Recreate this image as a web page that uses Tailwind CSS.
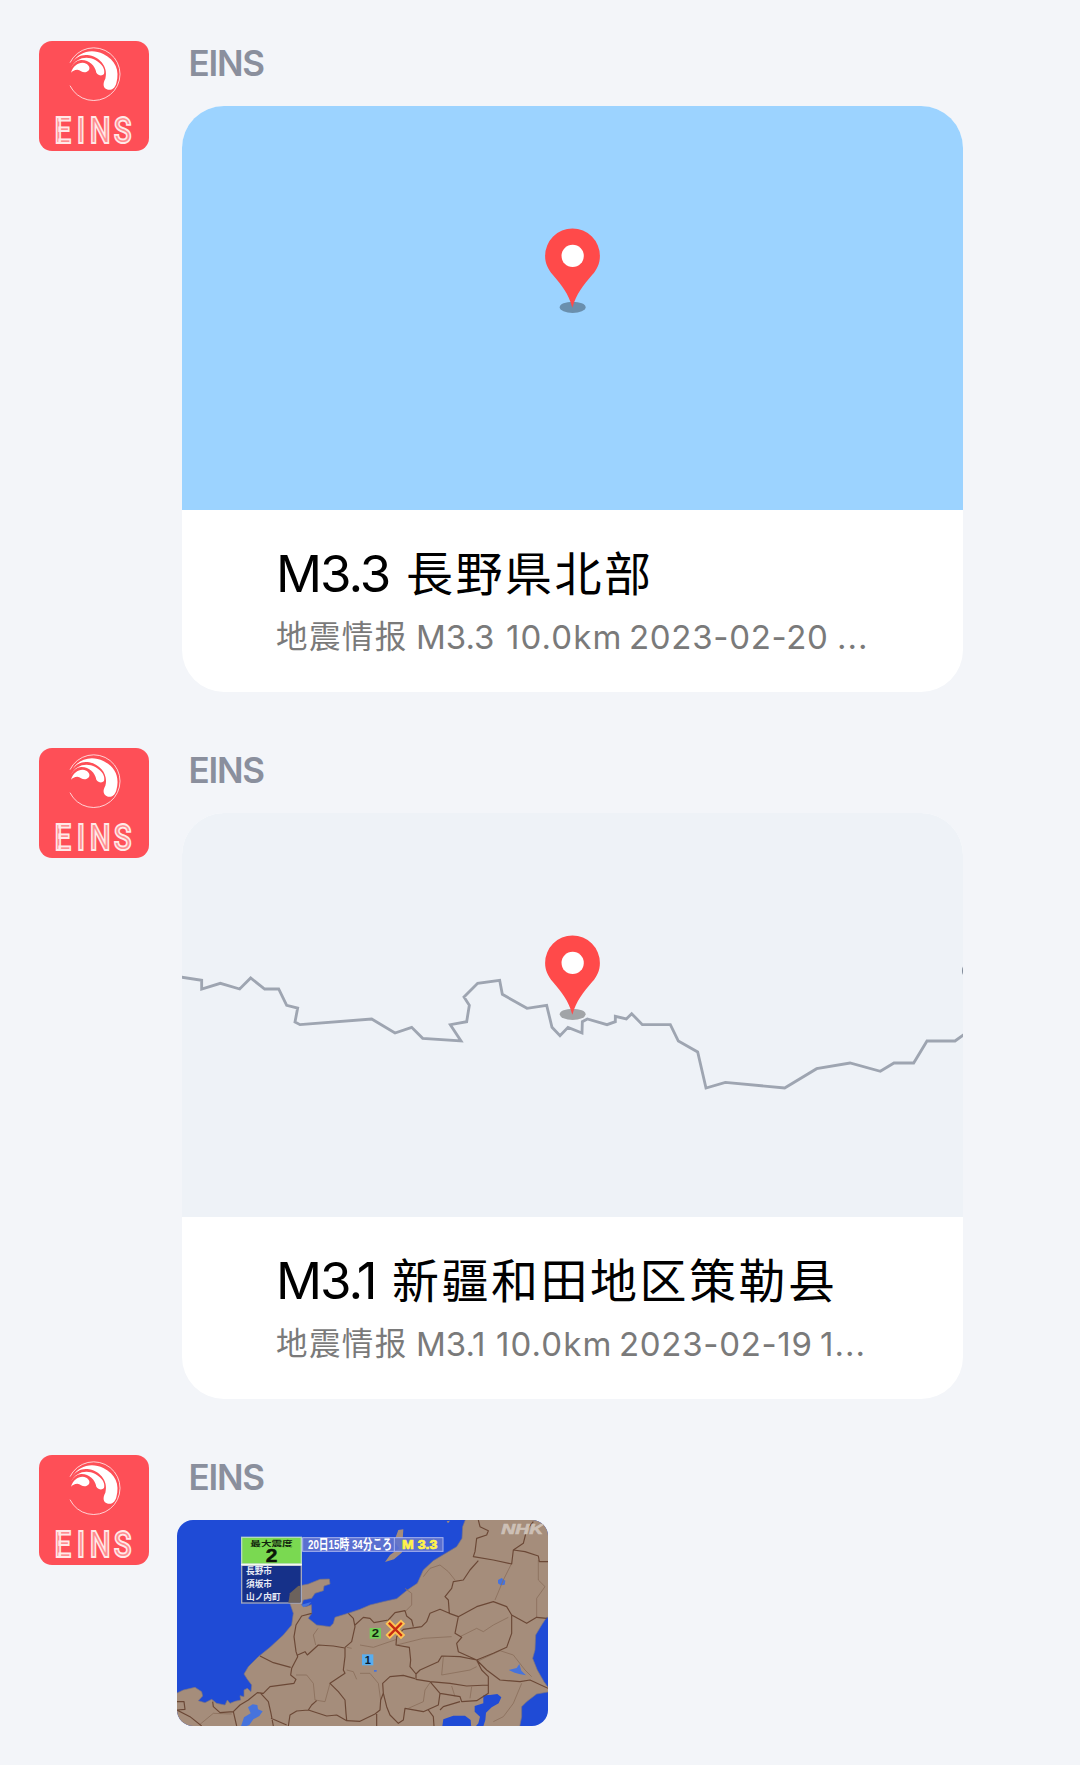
<!DOCTYPE html>
<html lang="zh-CN">
<head>
<meta charset="utf-8">
<meta name="viewport" content="width=device-width, initial-scale=1">
<title>EINS</title>
<script src="https://cdn.jsdelivr.net/npm/@tailwindcss/browser@4"></script>
</head>
<body class="bg-[#f3f5f9] font-['Inter','Noto_Sans_CJK_SC',sans-serif]">
<svg class="hidden" aria-hidden="true">
  <symbol id="logo" viewBox="57 63 330 330">
    <rect x="57" y="63" width="330" height="330" fill="#fe4f57"/>
    <path d="M150 128A79 79 0 1 1 150 197" fill="none" stroke="#fff" stroke-opacity=".75" stroke-width="3"/>
    <g fill="#fff">
      <path d="M157 128C176 95 215 84 250 102C286 120 300 150 289 190C284 207 274 211 264 209C248 205 248 190 256 176C265 146 245 114 208 106C186 102 170 110 157 128Z"/>
      <path d="M153 143C168 113 200 106 226 120C249 133 256 150 252 162C246 169 235 167 229 158C225 136 207 119 183 120C169 122 160 130 153 143Z"/>
      <path d="M153 158C160 136 180 123 199 131C212 139 211 151 199 156C188 160 182 150 172 149C163 149 158 153 153 158Z"/>
    </g>
    <text transform="scale(.8 1)" y="369" x="129 213 262 352" font-family="Roboto" font-size="110" font-weight="500" fill="#ff8c8f" stroke="#ffe9e8" stroke-width="5.500">EINS</text>
  </symbol>
  <symbol id="pin" viewBox="130 80 175 262">
    <ellipse cx="218" cy="322" rx="39" ry="17" fill="#000" fill-opacity=".32"/>
    <path d="M217 323C205 280 186 257 158 224C144 206 135 190 135 167A82.500 82.500 0 0 1 300 167C300 190 291 208 277 224C249 257 230 280 217 323Z" fill="#ff4a4a"/>
    <circle cx="218" cy="167" r="33.500" fill="#fff"/>
  </symbol>
</svg>

<main class="flex flex-col pt-[41px] pl-[39px]">
  <section class="flex h-[707px] items-start">
    <svg class="size-[110px] shrink-0 rounded-[13px]"><use href="#logo"/></svg>
    <div class="ml-7 flex flex-col">
      <h2 class="h-[65px] pl-[11.500px] text-[35px] leading-[45px] font-semibold tracking-[-1.200px] text-[#8a8f9d]">EINS</h2>
      <article class="ml-[5px] flex h-[586px] w-[781px] flex-col overflow-hidden rounded-[42px] bg-white">
        <div class="flex h-[404px] justify-center bg-[#9cd3ff] pt-[121px]">
          <svg class="h-[87px] w-[59px]"><use href="#pin"/></svg>
        </div>
        <div class="pt-8 pl-[94px] whitespace-nowrap">
          <h3 class="flex h-[71px] text-[51px] leading-[64px] text-black"><span class="w-[130px] tracking-[-2px]">M3.3</span><span class="text-[47px] tracking-[2.500px]">長野県北部</span></h3>
          <p class="flex h-[48px] text-[33px] leading-[48px] text-[#7a7a7a]"><span class="w-[140px] text-[31.500px] tracking-[1.400px]">地震情报</span><span class="w-[90px]">M3.3</span><span class="w-[123px] tracking-[1.100px]">10.0km</span><span class="w-[208px] tracking-[0.700px]">2023-02-20</span><span class="tracking-[1px]">...</span></p>
        </div>
      </article>
    </div>
  </section>

  <section class="flex h-[707px] items-start">
    <svg class="size-[110px] shrink-0 rounded-[13px]"><use href="#logo"/></svg>
    <div class="ml-7 flex flex-col">
      <h2 class="h-[65px] pl-[11.500px] text-[35px] leading-[45px] font-semibold tracking-[-1.200px] text-[#8a8f9d]">EINS</h2>
      <article class="ml-[5px] flex h-[586px] w-[781px] flex-col overflow-hidden rounded-[42px] bg-white">
        <div class="relative flex h-[404px] justify-center bg-[#eef2f7] pt-[121px]">
          <svg class="absolute inset-0 size-full" viewBox="36 -351 2343 1212" fill="none" stroke="#9ea5b1" stroke-width="8.500">
            <path d="M30 141L95 151L95 177L151 160L209 177L242 144L284 177L326 177L350 226L383 234L375 276L390 284L605 267L675 309L725 292L758 325L873 333L841 284L890 275L898 226L882 201L923 160L989 151L997 193L1071 235L1130 226L1146 292L1170 317L1194 292L1236 309L1237 275L1252 267L1311 284L1336 275L1336 259L1369 267L1385 251L1417 284L1501 284L1525 333L1583 366L1608 474L1666 457L1844 474L1940 416L2040 399L2131 424L2172 399L2231 399L2271 333L2355 333L2385 311"/>
            <ellipse cx="2384" cy="122" rx="8" ry="15" fill="#7f8998" stroke="none"/>
          </svg>
          <svg class="relative h-[87px] w-[59px]"><use href="#pin"/></svg>
        </div>
        <div class="pt-8 pl-[94px] whitespace-nowrap">
          <h3 class="flex h-[71px] text-[51px] leading-[64px] text-black"><span class="w-[116px] tracking-[-2px]">M3.1</span><span class="text-[47px] tracking-[2.500px]">新疆和田地区策勒县</span></h3>
          <p class="flex h-[48px] text-[33px] leading-[48px] text-[#7a7a7a]"><span class="w-[140px] text-[31.500px] tracking-[1.400px]">地震情报</span><span class="w-[80px]">M3.1</span><span class="w-[123px] tracking-[1.100px]">10.0km</span><span class="w-[201px] tracking-[0.700px]">2023-02-19</span><span class="tracking-[1px]">1...</span></p>
        </div>
      </article>
    </div>
  </section>

  <section class="flex items-start">
    <svg class="size-[110px] shrink-0 rounded-[13px]"><use href="#logo"/></svg>
    <div class="ml-7 flex flex-col">
      <h2 class="h-[65px] pl-[11.500px] text-[35px] leading-[45px] font-semibold tracking-[-1.200px] text-[#8a8f9d]">EINS</h2>
      <svg class="h-[206px] w-[371px] rounded-[16px]" viewBox="21 30 1113 618" font-family="'Liberation Sans','Noto Sans CJK JP',sans-serif">
        <rect x="21" y="30" width="1113" height="618" fill="#1f4bd6"/>
        <!-- land -->
        <path fill="#a58d7b" stroke="#7c7480" stroke-width="2" d="M15 552L40 540L75 532L95 545L98 558L85 572L105 578L125 568L140 580L165 585L172 570L180 580L195 574L212 570L210 557L222 560L222 540L232 535L243 545L245 525L232 508L222 492L235 470L265 440L300 412L340 375L365 345L370 310L358 275L360 250L385 228L415 222L450 208L478 207L480 222L462 228L460 242L435 250L425 265L400 270L395 285L408 290L424 284L425 310L415 325L440 345L480 350L490 340L495 322L540 308L570 298L600 285L640 275L680 266L712 240L742 220L760 180L790 152L830 128L860 110L876 85L878 50L888 24H1140V322H1130L1115 345L1097 375L1095 420L1088 445L1102 480L1122 515L1140 540V545L1100 552L1070 575L1055 590L1055 620L1048 655H15Z"/>
        <path fill="#a58d7b" d="M685 60L700 58L698 90L705 112L695 128L672 148L645 156L660 135L688 115L672 95ZM830 34L840 32L834 40Z"/>
        <!-- bays and lakes -->
        <path fill="#1f4bd6" d="M912 655L925 640L930 620L914 605L914 588L940 580L940 556L960 555L982 552L994 562L986 580L965 592L948 608L946 630L938 655ZM816 655L820 628L850 617L885 617L902 630L904 655Z"/>
        <path fill="#4673dc" d="M211 655L222 622L242 610L234 592L248 583L262 585L264 598L278 604L268 618L250 628L238 645ZM984 210L995 204L1006 212L1004 224L992 226L984 220ZM1016 480L1040 474L1048 462L1054 482L1068 496L1048 492L1034 488ZM394 284L424 276L415 286L400 292ZM612 480h8v5h-8Z"/>
        <!-- district lines -->
        <g fill="none" stroke="#8a6f5b" stroke-width="2.500">
          <path d="M444 355L430 375L437 405M378 495L410 495L430 520L435 570L465 575L480 520M90 643L130 610L185 612M530 480L550 485L560 508M545 415L530 412"/>
          <path transform="translate(570)" d="M190 200L210 175L240 165L265 185L285 210M135 235L155 250L155 285L135 305M110 405L190 385L275 380M300 380L350 355L370 365L400 345L445 322M455 160L430 210L405 270M535 150L535 210L555 230L530 265L530 322M0 405L40 412L110 388M350 455L420 422L460 435L495 480L515 500M250 440L245 495L330 480L350 470M145 595L190 575L195 540L210 518M485 520L460 580L430 620L400 635M275 528L285 560M335 530L330 565M0 490L30 490L55 520L62 570"/>
        </g>
        <g fill="none" stroke="#6b4836" stroke-width="3.500" stroke-linejoin="round">
          <path d="M270 438L310 458L362 472M425 310L395 318L378 345L372 380L378 425L383 440L365 475L362 495L378 508L372 520L300 530L280 550L262 548L235 570L210 585L190 605L150 608L130 590L128 575M383 435L405 425L412 435L445 405L490 408L525 414L525 440L520 480L525 490L480 520L505 545L525 570L528 610L530 630M525 412L545 395L555 350L550 325L535 310M555 345L580 322L600 325L612 338L655 330L675 308L705 302L710 318L725 330L730 350M270 548L295 575L303 610L310 648M303 625L350 645M355 648L360 615L380 603L415 600L470 618L500 615L530 632L570 634L615 612L630 600L632 570L640 550L638 520L660 500L700 496L735 506M415 600L425 585L440 572M21 600L45 598L42 575L21 575M21 600L60 620L95 648M190 605L200 648"/>
          <path transform="translate(570)" d="M355 30L360 50L385 62L380 75L350 85L345 125L340 140L400 150L455 162L460 120L495 125L535 138L538 155L564 155M460 120L490 100L500 60L520 35M355 152L330 180L310 210L280 215L275 235L255 260L265 270L268 310L295 320L350 290L400 275L440 290L455 315L500 340L530 322L560 325M268 310L240 298L210 310L200 335L185 350L130 358L110 380L108 405L148 412L152 450L150 470L168 492M295 320L285 370L305 382L290 400L295 425L350 450L400 430L440 412L455 370L455 315M350 450L300 440L245 438L235 455L180 480L168 492L168 508L210 515L270 520L320 528L385 525L385 500L365 480L350 450M350 450L380 480L420 510L480 515L510 510L564 535M210 515L240 550L300 560L305 575L350 572L385 550L385 525M70 550L80 590L90 615L115 640L130 630L135 595L190 605L235 585L240 550M205 600L220 620L222 648M240 600L250 590L300 575M50 612L50 648"/>
        </g>
        <!-- time banner -->
        <rect x="398" y="83" width="421" height="41" fill="#6073cf" fill-opacity=".9" stroke="#a9b4ee" stroke-width="3"/>
        <path d="M673 83V124" stroke="#a9b4ee" stroke-width="3"/>
        <text x="414" y="117" font-size="40" font-weight="700" fill="#fff" textLength="252" lengthAdjust="spacingAndGlyphs">20日15時 34分ころ</text>
        <text x="696" y="116" font-size="36" font-weight="700" fill="#fff34a" stroke="#fff34a" stroke-width="2" textLength="106" lengthAdjust="spacingAndGlyphs">M 3.3</text>
        <!-- intensity panel -->
        <rect x="215" y="82" width="179" height="80" fill="#7ad951" stroke="#b4d9bf" stroke-width="4"/>
        <rect x="215" y="166" width="179" height="113" fill="#14286f" fill-opacity=".75" stroke="#a3a8bd" stroke-width="4"/>
        <path d="M355 278L360 250L385 228L391 228V278Z" fill="#6c625c"/>
        <path d="M213 164H396" stroke="#f4f7ee" stroke-width="5"/>
        <text x="241" y="107" font-size="22" font-weight="700" fill="#10240c" textLength="127" lengthAdjust="spacingAndGlyphs">最大震度</text>
        <text x="287" y="155" font-size="56" font-weight="700" fill="#0b1508" stroke="#0b1508" stroke-width="1.500" textLength="35" lengthAdjust="spacingAndGlyphs">2</text>
        <g font-size="26" font-weight="700" fill="#e8ebf5">
          <text x="228" y="193">長野市</text>
          <text x="228" y="232">須坂市</text>
          <text x="228" y="271">山ノ内町</text>
        </g>
        <!-- readings and epicentre -->
        <rect x="599" y="354" width="34" height="32" fill="#72cf58"/>
        <text x="605" y="382" font-size="33" font-weight="700" fill="#10240c" textLength="22" lengthAdjust="spacingAndGlyphs">2</text>
        <rect x="576" y="433" width="34" height="33" fill="#58aef0"/>
        <text x="584" y="461" font-size="33" font-weight="700" fill="#0b1c30">1</text>
        <path d="M659 341L693 375M693 341L659 375" stroke="#ffc453" stroke-width="18" stroke-linecap="square"/>
        <path d="M659 341L693 375M693 341L659 375" stroke="#c72a12" stroke-width="7" stroke-linecap="square"/>
        <text x="994" y="72" font-size="43" font-weight="700" font-style="italic" fill="#cdc0b6" stroke="#cdc0b6" stroke-width="2" textLength="126" lengthAdjust="spacingAndGlyphs">NHK</text>
      </svg>
    </div>
  </section>
</main>
</body>
</html>
